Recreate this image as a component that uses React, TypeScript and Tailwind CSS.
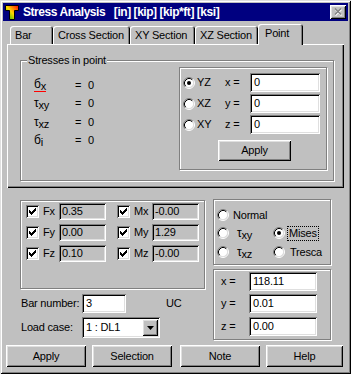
import React from "react";

const SUNKEN =
  "shadow-[inset_1px_1px_0_#808080,inset_-1px_-1px_0_#ffffff,inset_2px_2px_0_#000000,inset_-2px_-2px_0_#dfdfdf]";
const RAISED =
  "shadow-[inset_1px_1px_0_#ffffff,inset_-1px_-1px_0_#000000,inset_2px_2px_0_#dfdfdf,inset_-2px_-2px_0_#808080]";
const ETCHED =
  "border border-[#808080] shadow-[inset_1px_1px_0_#ffffff,1px_1px_0_#ffffff]";

function Radio({ checked }: { checked?: boolean }) {
  return (
    <svg width="12" height="12" viewBox="0 0 12 12" className="block shrink-0">
      <circle cx="6" cy="6" r="4.5" fill="#fff" />
      <path d="M2.11 9.89 A5.5 5.5 0 0 1 9.89 2.11" fill="none" stroke="#808080" />
      <path d="M9.89 2.11 A5.5 5.5 0 0 1 2.11 9.89" fill="none" stroke="#fff" />
      <path d="M2.82 9.18 A4.5 4.5 0 0 1 9.18 2.82" fill="none" stroke="#000" />
      <path d="M9.18 2.82 A4.5 4.5 0 0 1 2.82 9.18" fill="none" stroke="#dfdfdf" />
      {checked && <circle cx="6" cy="6" r="2" fill="#000" />}
    </svg>
  );
}

function Check() {
  const cols: [number, number][] = [
    [3, 5],
    [4, 6],
    [5, 7],
    [6, 6],
    [7, 5],
    [8, 4],
    [9, 3],
  ];
  return (
    <div className={`w-[13px] h-[13px] bg-white shrink-0 ${SUNKEN}`}>
      <svg width="13" height="13" viewBox="0 0 13 13" className="block">
        {cols.map(([x, y]) => (
          <rect key={x} x={x} y={y} width="1" height="3" fill="#000" />
        ))}
      </svg>
    </div>
  );
}

function Field({
  value,
  className,
  ro,
}: {
  value: string;
  className: string;
  ro?: boolean;
}) {
  return (
    <div
      className={`${SUNKEN} ${ro ? "bg-[#c0c0c0] pl-[3px]" : "bg-white pl-[4px]"} flex items-center shrink-0 ${className}`}
    >
      {value}
    </div>
  );
}

function Button({ label, className }: { label: string; className: string }) {
  return (
    <div className={`${RAISED} flex items-center justify-center shrink-0 ${className}`}>
      {label}
    </div>
  );
}

function Sym({ ch, sub }: { ch: string; sub: string }) {
  return (
    <span className="inline-flex items-baseline">
      <span className="text-[12px]">{ch}</span>
      <span className="text-[11px] relative top-[2px]">{sub}</span>
    </span>
  );
}

function Tab({ label, w, selected }: { label: string; w: string; selected?: boolean }) {
  return (
    <div
      className={`${w} bg-[#c0c0c0] rounded-t-[3px] flex items-center shadow-[inset_1px_1px_0_#ffffff,inset_-1px_0_0_#000000,inset_-2px_0_0_#808080] ${
        selected ? "relative z-10 h-[21px] -mb-px pl-[7px] pb-[2px]" : "h-[18px] pl-[5px]"
      }`}
    >
      {label}
    </div>
  );
}

function ForceRow({
  a,
  av,
  b,
  bv,
}: {
  a: string;
  av: string;
  b: string;
  bv: string;
}) {
  return (
    <div className="flex items-center h-[17px]">
      <Check />
      <span className="ml-[4px] w-[16px]">{a}</span>
      <Field value={av} ro className="w-[47px] h-[17px]" />
      <div className="ml-[11px]">
        <Check />
      </div>
      <span className="ml-[4px] w-[18px]">{b}</span>
      <Field value={bv} ro className="w-[47px] h-[17px]" />
    </div>
  );
}

export default function App() {
  return (
    <div
      className="w-[351px] h-[374px] bg-[#c0c0c0] p-[3px] flex flex-col text-black text-[11px] tracking-[-0.2px] leading-[13px] font-['Liberation_Sans',Arial,sans-serif] shadow-[inset_1px_1px_0_#dfdfdf,inset_-1px_-1px_0_#000000,inset_2px_2px_0_#ffffff,inset_-2px_-2px_0_#808080]"
    >
      {/* Title bar */}
      <div className="h-[18px] bg-[#000080] flex items-center pl-[2px] pr-[2px]">
        <svg width="14" height="15" viewBox="0 0 14 15" className="block shrink-0">
          <defs>
            <linearGradient id="tg" x1="1" y1="0" x2="0" y2="1">
              <stop offset="0" stopColor="#ff0000" />
              <stop offset="0.5" stopColor="#ffd800" />
              <stop offset="1" stopColor="#00b000" />
            </linearGradient>
          </defs>
          <path
            d="M0.5 0.5 H13.5 V5.5 H9.5 V14.5 H4.5 V5.5 H0.5 Z"
            fill="url(#tg)"
            stroke="#000"
          />
        </svg>
        <span className="ml-[4px] text-white font-bold text-[12px] tracking-[-0.45px] whitespace-pre">
          {"Stress Analysis   [in] [kip] [kip*ft] [ksi]"}
        </span>
        <div className={`ml-auto w-[16px] h-[14px] bg-[#c0c0c0] ${RAISED} flex items-center justify-center`}>
          <svg width="9" height="8" viewBox="0 0 9 8" className="block">
            <path d="M1.5 1.5 L7.5 7.5 M7.5 1.5 L1.5 7.5" stroke="#fff" strokeWidth="1.4" />
            <path d="M1 0.5 L7 6.5 M7 0.5 L1 6.5" stroke="#808080" strokeWidth="1.4" />
          </svg>
        </div>
      </div>

      {/* Tabs */}
      <div className="mt-[3px] h-[20px] flex items-end pl-[7px]">
        <Tab label="Bar" w="w-[43px]" />
        <Tab label="Cross Section" w="w-[77px]" />
        <Tab label="XY Section" w="w-[65px]" />
        <Tab label="XZ Section" w="w-[63px]" />
        <Tab label="Point" w="w-[45px]" selected />
      </div>

      {/* Tab panel */}
      <div className="ml-[4px] w-[337px] h-[144px] pt-[16px] pl-[13px] shadow-[inset_1px_1px_0_#ffffff,inset_-1px_-1px_0_#000000,inset_-2px_-2px_0_#808080]">
        <div className={`relative w-[314px] h-[121px] ${ETCHED}`}>
          <span className="absolute left-[6px] top-[-7px] bg-[#c0c0c0] px-[1px]">
            Stresses in point
          </span>
          <div className="flex justify-between pl-[13px] pr-[6px] pt-[6px]">
            <div className="mt-[9px] flex flex-col">
              <div className="h-[18px] flex items-center">
                <span className="w-[41px]">
                  <span className="inline-block border-b border-[#ff0000] leading-[12px] pb-[1px]">
                    <Sym ch="б" sub="x" />
                  </span>
                </span>
                <span className="w-[13px]">=</span>
                <span>0</span>
              </div>
              <div className="h-[19px] flex items-center">
                <span className="w-[41px]">
                  <Sym ch="τ" sub="xy" />
                </span>
                <span className="w-[13px]">=</span>
                <span>0</span>
              </div>
              <div className="h-[18px] flex items-center">
                <span className="w-[41px]">
                  <Sym ch="τ" sub="xz" />
                </span>
                <span className="w-[13px]">=</span>
                <span>0</span>
              </div>
              <div className="h-[18px] flex items-center">
                <span className="w-[41px]">
                  <Sym ch="б" sub="i" />
                </span>
                <span className="w-[13px]">=</span>
                <span>0</span>
              </div>
            </div>

            <div className={`w-[148px] h-[103px] ${ETCHED} pt-[5px] pl-[3px]`}>
              <div className="flex flex-col gap-[2px]">
                {[
                  ["YZ", "x =", true],
                  ["XZ", "y =", false],
                  ["XY", "z =", false],
                ].map(([p, c, ch]) => (
                  <div key={p as string} className="flex items-center h-[19px]">
                    <Radio checked={ch as boolean} />
                    <span className="ml-[2px] w-[28px]">{p as string}</span>
                    <span className="w-[25px]">{c as string}</span>
                    <Field value="0" className="w-[70px] h-[19px]" />
                  </div>
                ))}
              </div>
              <Button label="Apply" className="mt-[6px] ml-[35px] w-[73px] h-[21px]" />
            </div>
          </div>
        </div>
      </div>

      {/* Lower body */}
      <div className="mt-[11px] pl-[17px] flex h-[141px]">
        <div className="w-[185px] flex flex-col">
          <div className={`mt-[1px] h-[89px] ${ETCHED} pt-[2px] pl-[5px] flex flex-col gap-[4px]`}>
            <ForceRow a="Fx" av="0.35" b="Mx" bv="-0.00" />
            <ForceRow a="Fy" av="0.00" b="My" bv="1.29" />
            <ForceRow a="Fz" av="0.10" b="Mz" bv="-0.00" />
          </div>
          <div className="mt-[5px] flex items-center h-[19px] pl-[1px]">
            <span className="w-[61px]">Bar number:</span>
            <Field value="3" className="w-[44px] h-[19px]" />
            <span className="ml-[40px]">UC</span>
          </div>
          <div className="mt-[4px] flex items-center h-[21px] pl-[1px]">
            <span className="w-[61px]">Load case:</span>
            <div className={`${SUNKEN} bg-white w-[78px] h-[21px] flex items-center pl-[4px] pr-[2px]`}>
              <span className="flex-1">1 : DL1</span>
              <div className={`${RAISED} bg-[#c0c0c0] w-[16px] h-[17px] flex items-center justify-center`}>
                <svg width="7" height="4" viewBox="0 0 7 4" className="block">
                  <path d="M0 0 H7 L3.5 4 Z" fill="#000" />
                </svg>
              </div>
            </div>
          </div>
        </div>

        <div className="ml-[8px] w-[118px] flex flex-col">
          <div className={`h-[66px] ${ETCHED} pt-[7px] pl-[3px]`}>
            <div className="flex items-center h-[16px]">
              <Radio />
              <span className="ml-[4px]">Normal</span>
            </div>
            <div className="flex items-center h-[16px] mt-[2px]">
              <Radio />
              <span className="ml-[8px] w-[36px]">
                <Sym ch="τ" sub="xy" />
              </span>
              <Radio checked />
              <span className="ml-[2px] border border-dotted border-black px-[1px] leading-[13px]">
                Mises
              </span>
            </div>
            <div className="flex items-center h-[16px] mt-[3px]">
              <Radio />
              <span className="ml-[8px] w-[36px]">
                <Sym ch="τ" sub="xz" />
              </span>
              <Radio />
              <span className="ml-[5px]">Tresca</span>
            </div>
          </div>
          <div className={`mt-[4px] h-[71px] ${ETCHED} pt-[2px] pl-[7px] flex flex-col`}>
            <div className="flex items-center h-[19px]">
              <span className="w-[28px]">x =</span>
              <Field value="118.11" className="w-[68px] h-[19px]" />
            </div>
            <div className="flex items-center h-[19px] mt-[3px]">
              <span className="w-[28px]">y =</span>
              <Field value="0.01" className="w-[68px] h-[19px]" />
            </div>
            <div className="flex items-center h-[19px] mt-[4px]">
              <span className="w-[28px]">z =</span>
              <Field value="0.00" className="w-[68px] h-[19px]" />
            </div>
          </div>
        </div>
      </div>

      {/* Buttons */}
      <div className="mt-[5px] pl-[3px] flex">
        <Button label="Apply" className="w-[80px] h-[22px]" />
        <Button label="Selection" className="ml-[6px] w-[80px] h-[22px]" />
        <Button label="Note" className="ml-[8px] w-[80px] h-[22px]" />
        <Button label="Help" className="ml-[6px] w-[77px] h-[22px]" />
      </div>
    </div>
  );
}
